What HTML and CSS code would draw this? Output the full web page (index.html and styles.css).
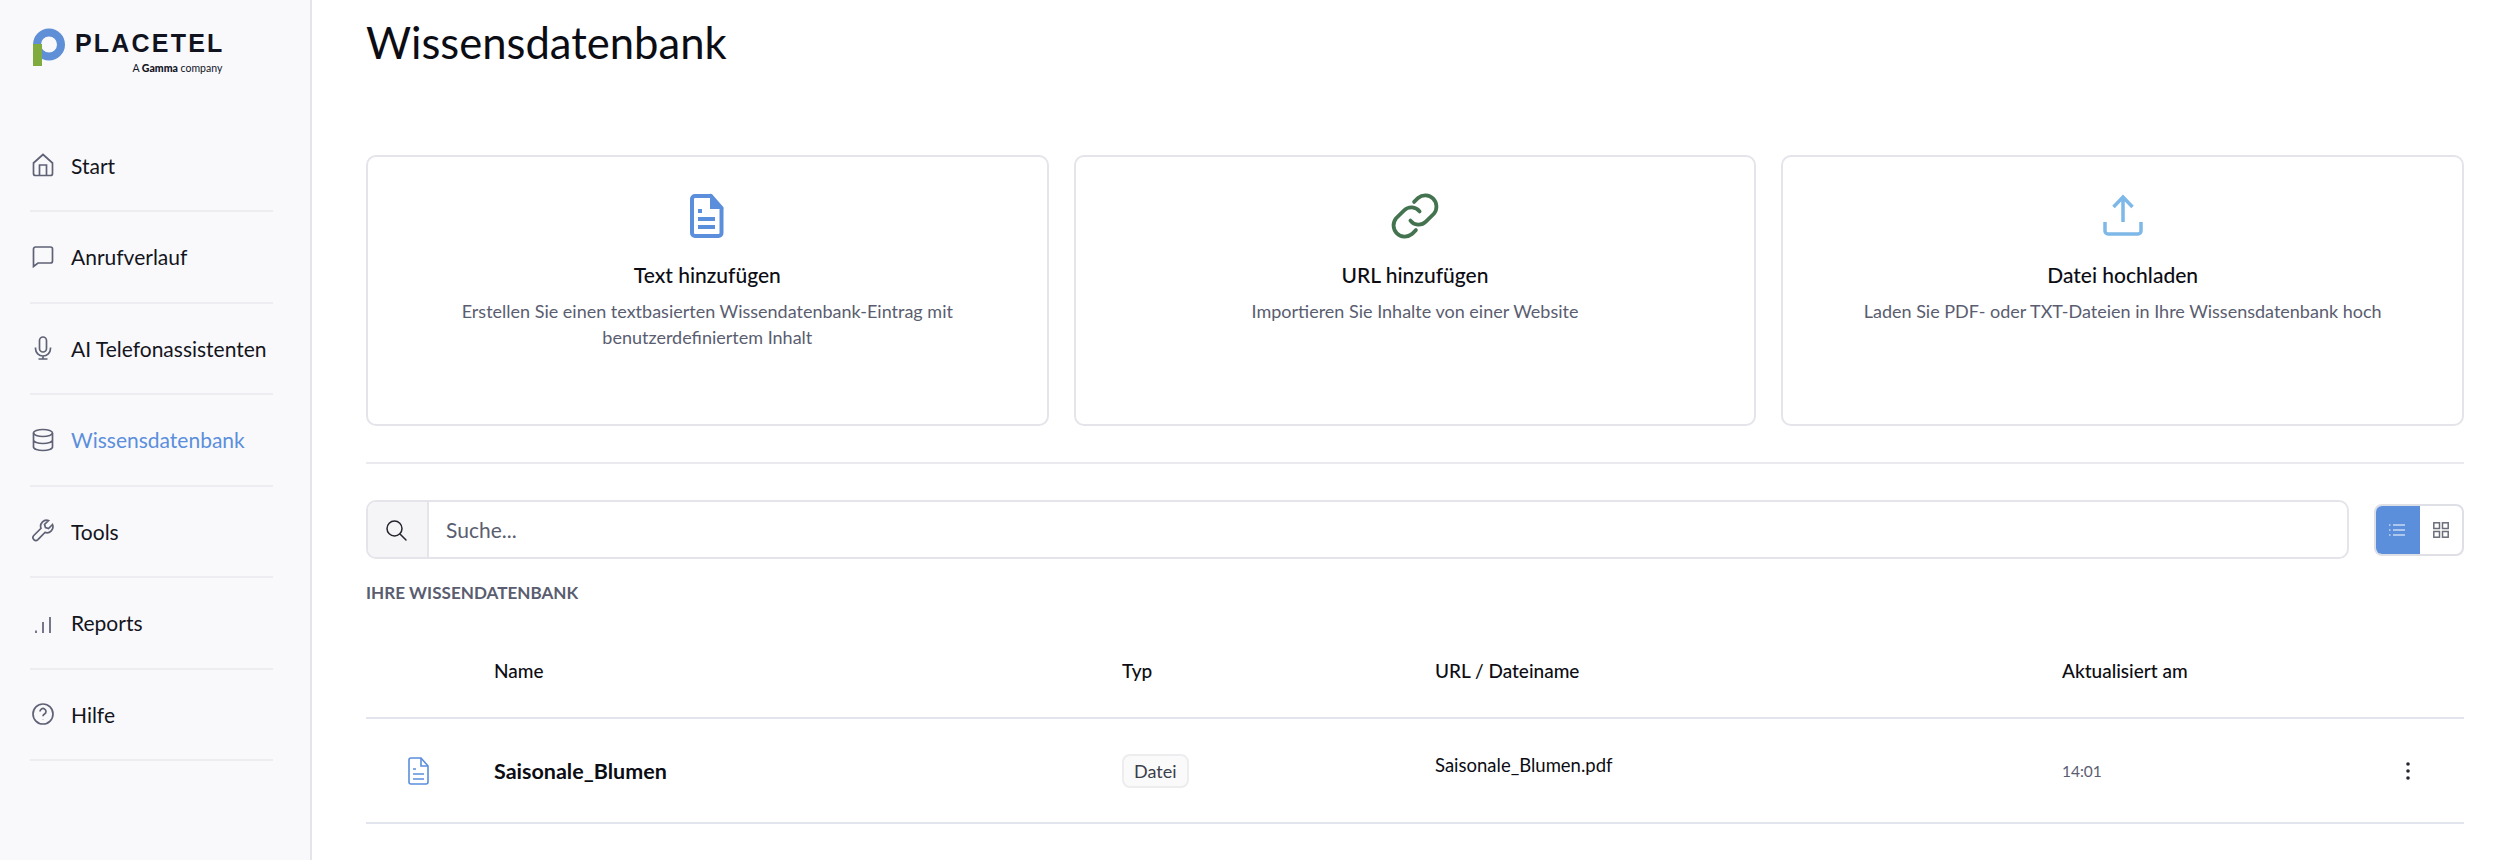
FILE: index.html
```html
<!DOCTYPE html>
<html lang="de">
<head>
    <meta charset="UTF-8">
    <meta name="viewport" content="width=device-width, initial-scale=1.0">
    <title>Wissensdatenbank</title>
    <link rel="stylesheet" href="styles.css">
</head>
<body>
    <div class="app">
        <aside class="sidebar">
            <div class="logo">
                <svg class="logo_mark" viewBox="0 0 32 38" width="32" height="38">
                    <circle cx="16" cy="16.5" r="12" fill="none" stroke="#5f8fd6" stroke-width="8"/>
                    <rect x="0" y="16" width="9" height="22" fill="#7fab3f"/>
                </svg>
                <div class="logo_text">
                    <div class="logo_name">PLACETEL</div>
                    <div class="logo_sub">A <b>Gamma</b> company</div>
                </div>
            </div>
            <nav class="nav">
                <a class="nav_item">
                    <svg class="nav_icon" viewBox="0 0 22 24"><path d="M1.500 10 11 1.500 20.500 10v10.500a2 2 0 0 1-2 2h-15a2 2 0 0 1-2-2z M7.500 22.500V12h7v10.500"/></svg>
                    <span>Start</span>
                </a>
                <a class="nav_item">
                    <svg class="nav_icon" viewBox="0 0 22 24"><path d="M1.500 21.500V4a2 2 0 0 1 2-2h15a2 2 0 0 1 2 2v12a2 2 0 0 1-2 2H6z"/></svg>
                    <span>Anrufverlauf</span>
                </a>
                <a class="nav_item">
                    <svg class="nav_icon" viewBox="0 0 22 24"><rect x="7.500" y="1" width="7" height="15" rx="3.500"/><path d="M3.500 11.500v1a7.500 7.500 0 0 0 15 0v-1 M11 20v3 M6.500 23h9"/></svg>
                    <span>AI Telefonassistenten</span>
                </a>
                <a class="nav_item nav_active">
                    <svg class="nav_icon" viewBox="0 0 22 24"><ellipse cx="11" cy="5" rx="9.500" ry="3.500"/><path d="M1.500 5v14c0 2 4.300 3.500 9.500 3.500s9.500-1.500 9.500-3.500V5 M1.500 12c0 2 4.300 3.500 9.500 3.500s9.500-1.500 9.500-3.500"/></svg>
                    <span>Wissensdatenbank</span>
                </a>
                <a class="nav_item">
                    <svg class="nav_icon" viewBox="0 0 22 24"><path d="M20.500 5.500 16.500 9.500 13.500 8.500 12.500 5.500 16.500 1.500a6 6 0 0 0-7.500 7.800L1.800 16.500a2.900 2.900 0 0 0 4.100 4.100L13 13.400a6 6 0 0 0 7.500-7.900z"/></svg>
                    <span>Tools</span>
                </a>
                <a class="nav_item">
                    <svg class="nav_icon" viewBox="0 0 22 24"><path d="M4 22v-2.500 M11 22V11 M18 22V6"/></svg>
                    <span>Reports</span>
                </a>
                <a class="nav_item">
                    <svg class="nav_icon" viewBox="0 0 22 24"><circle cx="11" cy="12" r="10"/><path d="M8 9.500a3 3 0 1 1 4.500 2.600c-1 .6-1.500 1.200-1.500 2.200 M11 17.500v.3"/></svg>
                    <span>Hilfe</span>
                </a>
            </nav>
        </aside>

        <main class="main">
            <h1 class="title">Wissensdatenbank</h1>

            <div class="cards">
                <div class="card">
                    <svg class="card_icon" viewBox="0 0 48 48" fill="none" stroke="#5b8fdb" stroke-width="4">
                        <path d="M12 4h16l10.500 12v25a3 3 0 0 1-3 3H12a3 3 0 0 1-3-3V7a3 3 0 0 1 3-3z"/>
                        <path d="M28 4l10.500 12H28z" fill="#5b8fdb" stroke-width="2"/>
                        <path d="M15 19h4 M15 27h17 M15 35h17"/>
                    </svg>
                    <h3 class="card_title">Text hinzufügen</h3>
                    <p class="card_desc">Erstellen Sie einen textbasierten Wissendatenbank-Eintrag mit<br>benutzerdefiniertem Inhalt</p>
                </div>
                <div class="card">
                    <svg class="card_icon" viewBox="3 3 42 42" fill="none" stroke="#44734f" stroke-width="3.300" stroke-linecap="round">
                        <path d="M20 28a9 9 0 0 0 13.500 1l7-7a9.800 9.800 0 0 0-13.800-13.800l-3.500 3.500"/>
                        <path d="M28 20a9 9 0 0 0-13.500-1l-7 7a9.800 9.800 0 0 0 13.800 13.800l3.500-3.500"/>
                    </svg>
                    <h3 class="card_title">URL hinzufügen</h3>
                    <p class="card_desc">Importieren Sie Inhalte von einer Website</p>
                </div>
                <div class="card">
                    <svg class="card_icon" viewBox="0 0 48 48" fill="none" stroke="#7db8e8" stroke-width="3.500">
                        <path d="M24 30V5 M14.500 15 24 5l9.500 10"/>
                        <path d="M6 30v9a3 3 0 0 0 3 3h30a3 3 0 0 0 3-3v-9"/>
                    </svg>
                    <h3 class="card_title">Datei hochladen</h3>
                    <p class="card_desc">Laden Sie PDF- oder TXT-Dateien in Ihre Wissensdatenbank hoch</p>
                </div>
            </div>

            <hr class="divider">

            <div class="tools">
                <div class="search">
                    <span class="search_icon">
                        <svg viewBox="0 0 24 24" width="24" height="24" fill="none" stroke="#25262e" stroke-width="1.500" stroke-linecap="round"><circle cx="10.500" cy="10.500" r="7.500"/><path d="M16 16l6 6"/></svg>
                    </span>
                    <span class="search_input">Suche...</span>
                </div>
                <div class="toggle">
                    <span class="toggle_btn toggle_on">
                        <svg viewBox="0 0 16 12" width="16" height="12" fill="none" stroke="#fff" stroke-width="1"><path d="M4 1h12 M4 6h12 M4 11h12 M0 1h1.500 M0 6h1.500 M0 11h1.500"/></svg>
                    </span>
                    <span class="toggle_btn">
                        <svg viewBox="0 0 16 16" width="16" height="16" fill="none" stroke="#6b6d7a" stroke-width="1.500"><rect x=".8" y=".8" width="5.700" height="5.700"/><rect x="9.500" y=".8" width="5.700" height="5.700"/><rect x=".8" y="9.500" width="5.700" height="5.700"/><rect x="9.500" y="9.500" width="5.700" height="5.700"/></svg>
                    </span>
                </div>
            </div>

            <div class="section_label">IHRE WISSENDATENBANK</div>

            <div class="table_row table_head">
                <span></span>
                <span>Name</span>
                <span>Typ</span>
                <span>URL / Dateiname</span>
                <span>Aktualisiert am</span>
                <span></span>
            </div>
            <div class="table_row table_item">
                <span class="row_icon">
                    <svg viewBox="0 0 21 28" width="21" height="28" fill="none" stroke="#5b8fdb" stroke-width="1.600"><path d="M3 1h10l7 8v16a2 2 0 0 1-2 2H3a2 2 0 0 1-2-2V3a2 2 0 0 1 2-2z"/><path d="M13 1v8h7 M5 12h3 M5 17h11 M5 22h11"/></svg>
                </span>
                <span class="row_name">Saisonale_Blumen</span>
                <span><span class="badge">Datei</span></span>
                <span class="row_file">Saisonale_Blumen.pdf</span>
                <span class="row_date">14:01</span>
                <span class="row_menu">
                    <svg viewBox="0 0 4 18" width="4" height="18" fill="#25262e"><circle cx="2" cy="2" r="1.800"/><circle cx="2" cy="9" r="1.800"/><circle cx="2" cy="16" r="1.800"/></svg>
                </span>
            </div>
        </main>
    </div>
</body>
</html>
```

FILE: styles.css
```css
* { box-sizing: border-box; }
html, body { margin: 0; padding: 0; height: 100%; overflow: hidden; }
body { font-family: "Lato", "Liberation Sans", sans-serif; color: #0c0d14; background: #fff; }

.app { display: flex; height: 860px; }

.sidebar { width: 312px; flex: none; background: #f9f9fc; border-right: 2px solid #e4e4ea; padding: 28px 37px 0 30px; }

.logo { display: flex; gap: 10px; padding-left: 3px; height: 92.500px; }
.logo_mark { flex: none; }
.logo_text { text-align: right; padding-top: 1px; }
.logo_name { font-family: "Liberation Sans", sans-serif; font-weight: 700; font-size: 25px; line-height: 29px; letter-spacing: 2.200px; margin-right: -2.200px; color: #11141f; }
.logo_sub { font-size: 10.500px; line-height: 20px; color: #11141f; }
.logo_sub b { font-weight: 900; }

.nav_item { display: flex; align-items: center; gap: 17px; height: 91.500px; border-bottom: 2px solid #ededf1; padding-left: 2px; font-size: 21px; color: #14151c; }
.nav_active { color: #5b8fdb; }
.nav_icon { width: 22px; height: 24px; flex: none; fill: none; stroke: #5f6275; stroke-width: 1.700; }

.main { flex: 1; padding: 0 42px 0 54px; min-width: 0; }

.title { font-size: 43.600px; font-weight: 400; line-height: 56px; margin: 14px 0 0; color: #0c0d14; }

.cards { display: grid; grid-template-columns: repeat(3, 1fr); gap: 25px; margin-top: 85px; }
.card { height: 271px; border: 2px solid #e4e4ea; border-radius: 10px; padding: 35px 20px 0; text-align: center; }
.card_icon { display: block; width: 48px; height: 48px; margin: 0 auto; }
.card_title { font-size: 21px; font-weight: 500; line-height: 28px; margin: 21px 0 0; color: #0c0d14; }
.card_desc { font-size: 18px; line-height: 26px; margin: 9px 0 0; color: #5a5d70; }

.divider { border: none; border-top: 2px solid #ebebef; margin: 36px 0 0; }

.tools { display: flex; align-items: center; gap: 25px; margin-top: 36px; }
.search { flex: 1; display: flex; height: 59px; border: 2px solid #e4e4ea; border-radius: 10px; overflow: hidden; }
.search_icon { width: 61px; display: flex; align-items: center; justify-content: center; padding-right: 3px; background: #f5f5f7; border-right: 2px solid #e4e4ea; }
.search_input { flex: 1; display: flex; align-items: center; padding-left: 17px; font-size: 21px; color: #5a5d70; }

.toggle { display: flex; width: 90px; height: 52px; border: 2px solid #dfdfe6; border-radius: 8px; overflow: hidden; }
.toggle_btn { flex: 1; display: flex; align-items: center; justify-content: center; }
.toggle_on { background: #5b8fdb; flex: none; width: 46px; margin: -2px 0 -2px -2px; }

.section_label { font-size: 17.100px; font-weight: 700; line-height: 24px; margin-top: 22px; color: #5a5d70; }

.table_row { display: grid; grid-template-columns: 128px 628px 313px 627px 1fr 58px; align-items: center; border-bottom: 2px solid #e2e5ee; }
.table_head { height: 114px; padding-top: 19px; font-size: 19px; font-weight: 500; }
.table_item { height: 105px; }
.row_icon { display: flex; justify-content: center; width: 105px; }
.row_name { font-size: 21.500px; font-weight: 700; }
.badge { display: inline-block; font-size: 18px; line-height: 28px; padding: 1px 10px; border: 2px solid #ededf0; border-radius: 8px; background: #fafafa; color: #3c3e4b; }
.row_file { font-size: 18.500px; position: relative; top: -6px; }
.row_date { font-size: 15.500px; color: #5a5d70; }
.row_menu { display: flex; justify-content: flex-start; }
```
